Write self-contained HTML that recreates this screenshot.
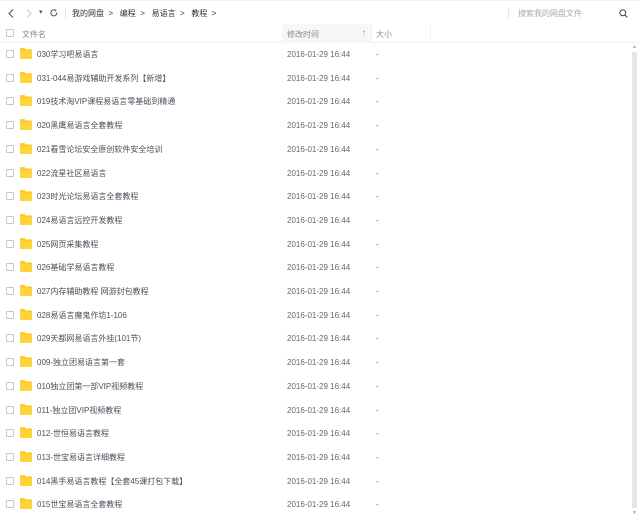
<!DOCTYPE html>
<html><head><meta charset="utf-8"><style>
*{margin:0;padding:0;box-sizing:border-box}
body{width:640px;height:518px;background:#fff;font-family:"Liberation Sans","Noto Sans CJK SC",sans-serif;font-size:8px;color:#424e67;position:relative;overflow:hidden}
.a{position:absolute;white-space:nowrap}
.top{position:absolute;left:0;top:0;width:640px;height:24px;border-top:1px solid #f0f0f0}
.hdr{position:absolute;left:0;top:24px;width:640px;height:19px;border-bottom:1px solid #f2f2f2;color:#888}
.cb{position:absolute;width:8px;height:8px;border:1px solid #c8c8c8;border-radius:1px;left:6px}
.fd{position:absolute;left:20px;width:12px;height:11px}
.row{position:absolute;left:0;width:630px;height:24px}
.row .n{position:absolute;left:37px;top:6px;color:#4a4f5c}
.row .d{position:absolute;left:287px;top:7px;color:#666}
.row .s{position:absolute;left:376px;top:7px;color:#666}
</style></head><body>
<div class="top">
<svg class="a" style="left:8px;top:8px" width="6" height="9" viewBox="0 0 6 9"><path d="M5 0.5L1 4.5L5 8.5" fill="none" stroke="#555" stroke-width="1.1"/></svg>
<svg class="a" style="left:26px;top:8px" width="6" height="9" viewBox="0 0 6 9"><path d="M1 0.5L5 4.5L1 8.5" fill="none" stroke="#ccc" stroke-width="1.1"/></svg>
<span class="a" style="left:39px;top:7px;font-size:7px;color:#555">&#9662;</span>
<svg class="a" style="left:50px;top:8px" width="8" height="8" viewBox="0 0 8 8"><path d="M6.8 3.5A3 3 0 1 1 5.5 1.4" fill="none" stroke="#555" stroke-width="1"/><path d="M4.8 0.3L6.6 1.2L5.2 2.7Z" fill="#555"/></svg>
<div class="a" style="left:65px;top:7px;width:1px;height:10px;background:#e5e5e5"></div>
<span class="a" style="left:72px;top:7px;color:#333">我的网盘 &nbsp;&gt;&nbsp;&nbsp; 编程 &nbsp;&gt;&nbsp;&nbsp; 易语言 &nbsp;&gt;&nbsp;&nbsp; 教程 &nbsp;&gt;</span>
<div class="a" style="left:508px;top:7px;width:1px;height:10px;background:#e5e5e5"></div>
<span class="a" style="left:518px;top:7px;color:#aaa">搜索我的网盘文件</span>
<svg class="a" style="left:619px;top:8px" width="9" height="9" viewBox="0 0 9 9"><circle cx="3.8" cy="3.8" r="2.9" fill="none" stroke="#444" stroke-width="1"/><path d="M6 6L8.3 8.3" stroke="#444" stroke-width="1.1"/></svg>
</div>
<div class="hdr">
<div class="cb" style="top:5px"></div>
<span class="a" style="left:22px;top:5px">文件名</span>
<div class="a" style="left:282px;top:0;width:89px;height:19px;background:#f7f7f7"></div>
<span class="a" style="left:287px;top:5px">修改时间</span>
<span class="a" style="left:362px;top:4px;color:#3b8cff">↑</span>
<div class="a" style="left:371px;top:0;width:1px;height:19px;background:#f0f0f0"></div>
<span class="a" style="left:376px;top:5px">大小</span>
<div class="a" style="left:430px;top:0;width:1px;height:19px;background:#f0f0f0"></div>
</div>
<div class="a" style="left:632px;top:52px;width:5px;height:456px;background:#e6e6e6;border-radius:1px"></div>
<span class="a" style="left:632px;top:44px;font-size:5px;color:#aaa">▲</span>
<span class="a" style="left:632px;top:510px;font-size:5px;color:#aaa">▼</span>
<div id="rows"></div>
<script>
var n=["030学习吧易语言","031-044易游戏辅助开发系列【新增】","019技术淘VIP课程易语言零基础到精通","020黑鹰易语言全套教程","021看雪论坛安全原创软件安全培训","022流星社区易语言","023时光论坛易语言全套教程","024易语言远控开发教程","025网页采集教程","026基础学易语言教程","027内存辅助教程 网游封包教程","028易语言魔鬼作坊1-106","029天都网易语言外挂(101节)","009-独立团易语言第一套","010独立团第一部VIP视频教程","011-独立团VIP视频教程","012-世恒易语言教程","013-世宝易语言详细教程","014黑手易语言教程【全套45课打包下载】","015世宝易语言全套教程"];
var h="";for(var i=0;i<n.length;i++){var t=Math.round(43+i*23.7);
h+='<div class="row" style="top:'+t+'px"><div class="cb" style="top:7px"></div><svg class="fd" style="top:5px" viewBox="0 0 12 11"><path d="M0 1.2Q0 0 1.2 0H4.5L5.6 1.4H10.8Q12 1.4 12 2.6V9.8Q12 11 10.8 11H1.2Q0 11 0 9.8Z" fill="#ffc926"/><path d="M0 3H12V9.8Q12 11 10.8 11H1.2Q0 11 0 9.8Z" fill="#ffd43b"/></svg><span class="n">'+n[i]+'</span><span class="d">2016-01-29 16:44</span><span class="s">-</span></div>';}
document.getElementById("rows").innerHTML=h;
</script>
</body></html>
